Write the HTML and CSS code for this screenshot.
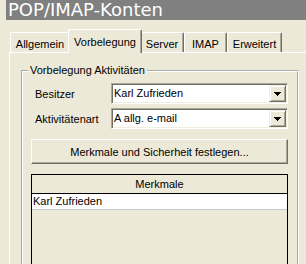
FILE: index.html
```html
<!DOCTYPE html>
<html lang="de">
<head>
    <meta charset="UTF-8">
    <title>POP/IMAP-Konten</title>
    <link rel="stylesheet" href="styles.css">
</head>
<body>
    <div class="title">POP/IMAP-Konten</div>
    <div class="tabs">
        <div class="tab tab-allgemein">Allgemein</div>
        <div class="tab tab-active">Vorbelegung</div>
        <div class="tab tab-server">Server</div>
        <div class="tab tab-imap">IMAP</div>
        <div class="tab tab-erweitert">Erweitert</div>
    </div>
    <div class="page">
        <fieldset class="group">
            <legend>Vorbelegung Aktivitäten</legend>
            <div class="field">
                <label>Besitzer</label>
                <div class="combo">
                    <span class="combo-text">Karl Zufrieden</span>
                    <span class="combo-btn"><svg width="7" height="4" viewBox="0 0 7 4"><path d="M0 0h7v1H0z M1 1h5v1H1z M2 2h3v1H2z M3 3h1v1H3z" fill="#000"/></svg></span>
                </div>
            </div>
            <div class="field">
                <label>Aktivitätenart</label>
                <div class="combo">
                    <span class="combo-text">A allg. e-mail</span>
                    <span class="combo-btn"><svg width="7" height="4" viewBox="0 0 7 4"><path d="M0 0h7v1H0z M1 1h5v1H1z M2 2h3v1H2z M3 3h1v1H3z" fill="#000"/></svg></span>
                </div>
            </div>
            <button class="btn">Merkmale und Sicherheit festlegen...</button>
            <div class="list">
                <div class="list-head">Merkmale</div>
                <div class="list-row">Karl Zufrieden</div>
            </div>
        </fieldset>
    </div>
</body>
</html>
```

FILE: styles.css
```css
html, body {
    overflow: hidden;
}
body {
    margin: 0;
    background-color: #ece9d8;
    font-family: "Liberation Sans", Arial, sans-serif;
    font-size: 11px;
    color: #000;
}
.title {
    margin-left: 6px;
    height: 20px;
    padding-left: 2px;
    background-color: #808080;
    color: #fff;
    font-family: "DejaVu Sans", Verdana, sans-serif;
    font-size: 18px;
    line-height: 20px;
}
.tabs {
    display: flex;
    align-items: flex-end;
    margin: 9px 0 0 10px;
}
.tab {
    box-sizing: border-box;
    height: 20px;
    padding-top: 5px;
    line-height: 13px;
    text-align: center;
    background-color: #ece9d8;
    border-top: 1px solid #fff;
    border-left: 1px solid #fff;
    border-right: 1px solid #716f64;
    border-radius: 2px 2px 0 0;
    box-shadow: inset -1px 0 0 #aca899;
}
.tab-allgemein { width: 60px; }
.tab-server { width: 44px; }
.tab-imap { width: 43px; }
.tab-erweitert { width: 55px; }
.tab-active {
    position: relative;
    z-index: 1;
    width: 74px;
    height: 24px;
    margin: 0 -2px -1px -2px;
    padding-top: 6px;
}
.page {
    width: 320px;
    margin-left: 9px;
    padding: 11px 0 0 11px;
    border-top: 1px solid #fff;
    border-left: 1px solid #fff;
}
.group {
    box-sizing: border-box;
    width: 278px;
    margin: 0;
    padding: 6px 9px 0 8px;
    border: 2px groove #fff;
}
.group legend {
    margin-left: -3px;
    padding: 0 2px;
    line-height: 13px;
}
.field {
    display: flex;
    align-items: center;
    margin-bottom: 4px;
}
.field label {
    flex: 1;
    padding-left: 4px;
}
.combo {
    box-sizing: border-box;
    display: flex;
    width: 177px;
    height: 21px;
    background-color: #fff;
    border: 1px solid;
    border-color: #aca899 #fff #fff #aca899;
    box-shadow: inset 1px 1px 0 #716f64, inset -1px -1px 0 #f1efe2;
    padding: 1px;
}
.combo-text {
    flex: 1;
    padding-left: 1px;
    line-height: 17px;
}
.combo-btn {
    box-sizing: border-box;
    display: flex;
    align-items: center;
    justify-content: center;
    width: 17px;
    height: 17px;
    padding-top: 1px;
    background-color: #ece9d8;
    border: 1px solid;
    border-color: #f1efe2 #716f64 #716f64 #f1efe2;
    box-shadow: inset 1px 1px 0 #fff, inset -1px -1px 0 #aca899;
}
.btn {
    display: block;
    box-sizing: border-box;
    width: 100%;
    height: 25px;
    margin-top: 10px;
    padding: 0;
    font-family: inherit;
    font-size: 11px;
    color: #000;
    background-color: #ece9d8;
    border: 1px solid;
    border-color: #fff #716f64 #716f64 #fff;
    box-shadow: inset -1px -1px 0 #aca899;
}
.list {
    height: 120px;
    margin-top: 10px;
    border: 1px solid #000;
}
.list-head {
    height: 18px;
    line-height: 18px;
    text-align: center;
    border-bottom: 1px solid #000;
}
.list-row {
    height: 15px;
    padding-left: 1px;
    line-height: 15px;
    background-color: #fff;
    border-bottom: 1px solid #c8c8c8;
}
```
